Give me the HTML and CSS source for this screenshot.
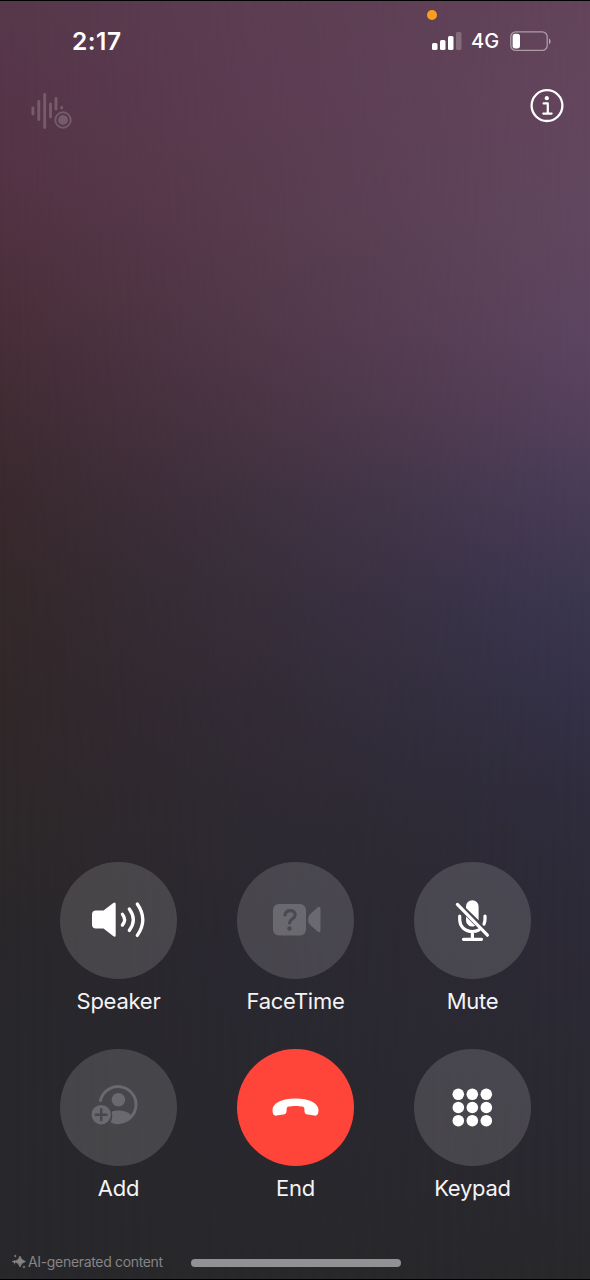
FILE: index.html
```html
<!DOCTYPE html>
<html lang="en">
<head>
<meta charset="utf-8">
<title>Call</title>
<link rel="stylesheet" href="styles.css">
</head>
<body>
<main class="phone">
  <header class="status">
    <time class="clock">2:17</time>
    <div class="status-icons">
      <svg class="signal" width="30" height="18" viewBox="0 0 30 18" fill="#fff">
        <rect x="0" y="11" width="5.500" height="7" rx="1.600"/>
        <rect x="8" y="8" width="5.500" height="10" rx="1.600"/>
        <rect x="16" y="4" width="5.500" height="14" rx="1.600"/>
        <rect x="24" y="0" width="5.500" height="18" rx="1.600" opacity=".22"/>
      </svg>
      <span class="network">4G</span>
      <svg class="battery" width="41" height="21" viewBox="0 0 41 21">
        <rect x=".8" y=".8" width="36.400" height="18.600" rx="5" fill="none" stroke="#fff" stroke-opacity=".48" stroke-width="1.300"/>
        <rect x="2.600" y="2.800" width="7.400" height="14.600" rx="2.600" fill="#fff"/>
        <path d="M39 7.500c2 .9 2 4.800 0 5.700z" fill="#fff" opacity=".55"/>
      </svg>
    </div>
    <i class="mic-dot"></i>
  </header>
  <nav class="tools">
    <svg width="42" height="38" viewBox="0 0 42 38" class="record">
      <g fill="none" stroke="currentColor" stroke-width="2.900" stroke-linecap="round">
        <path d="M2.900 16v6M8.800 9.500v18M14.700 2.500v33M20.500 12v13M26 6.500v10.500M31.700 15.500v.5"/>
        <circle cx="33" cy="28" r="7.700" stroke-width="1.900"/>
      </g>
      <circle cx="33" cy="28" r="5" fill="currentColor"/>
    </svg>
    <svg width="34" height="34" viewBox="0 0 34 34" class="info">
      <circle cx="17" cy="16.600" r="15.400" fill="none" stroke="#fff" stroke-width="2.300"/>
      <circle cx="16.800" cy="9.200" r="2.100" fill="#fff"/>
      <path d="M13.600 14.400h4.200v10M13.300 24.600h8.300" fill="none" stroke="#fff" stroke-width="2.200" stroke-linecap="round" stroke-linejoin="round"/>
    </svg>
  </nav>
  <section class="controls">
    <div class="control">
      <button class="disc" aria-label="Speaker">
        <svg width="117" height="117" viewBox="0 0 117 117">
          <path d="M36 48.500h7.500L53.300 41q2.400-1.600 2.400 1.200v30.800q0 3-2.600 1.100L43.500 66.500H36q-4 0-4-4V52.500q0-4 4-4z" fill="#fff"/>
          <path d="M62.400 52.300q4.400 5.400 0 10.800M69.300 47q8 10.700 0 21.400M77.300 42q11 15.700 0 31.400" fill="none" stroke="#fff" stroke-width="3.300" stroke-linecap="round"/>
        </svg>
      </button>
      <span class="label">Speaker</span>
    </div>
    <div class="control">
      <button class="disc" aria-label="FaceTime">
        <svg width="117" height="117" viewBox="0 0 117 117">
          <rect x="36" y="42" width="33" height="31.500" rx="6" class="dim"/>
          <path d="M83.500 46.500v22q0 2.500-2.300 1.500L73.300 63Q71 61 71 57.500t2.300-5.500L81.200 45q2.300-1 2.300 1.500z" class="dim"/>
          <path d="M48 53c.7-6 10.300-5.500 10.200-.3 0 4.300-5.400 3.900-5.600 8.300" fill="none" stroke="#4b4850" stroke-width="3.100" stroke-linecap="round"/>
          <circle cx="52.500" cy="66.500" r="2.200" fill="#4b4850"/>
        </svg>
      </button>
      <span class="label">FaceTime</span>
    </div>
    <div class="control">
      <button class="disc" aria-label="Mute">
        <svg width="117" height="117" viewBox="0 0 117 117">
          <path d="M52 44.500a6.300 6.300 0 0 1 12.600 0v13.700L52 46z" fill="#fff"/>
          <path d="M52 54.500l9.200 9.200Q56 66.200 52.800 61.500q-.8-1.500-.8-3.500z" fill="#fff"/>
          <path d="M45.700 54v3c0 8 5.500 12.500 12.700 12.500q3.700 0 6.600-1.700M71 54v3q0 3-1 5M58.400 69.500v7.500M49.500 77.300h18" fill="none" stroke="#fff" stroke-width="3.200" stroke-linecap="round"/>
          <path d="M43.400 42.400l30 30.800" fill="none" stroke="#fff" stroke-width="3.200" stroke-linecap="round"/>
        </svg>
      </button>
      <span class="label">Mute</span>
    </div>
    <div class="control">
      <button class="disc" aria-label="Add">
        <svg width="117" height="117" viewBox="0 0 117 117">
          <path d="M40.500 51.500A18 18 0 1 1 53.500 73" fill="none" class="dim-line"/>
          <circle cx="58.400" cy="50.800" r="6.800" class="dim"/>
          <path d="M51.700 62.800q2.500-1.200 6.700-1.200c6.500 0 12.100 2.500 13.700 6.100-4.300 5.500-11.200 8-21.500 5.800q2.700-5.500 1.100-10.700z" class="dim"/>
          <circle cx="41.200" cy="65.700" r="9.700" class="dim"/>
          <path d="M35.800 65.700h10.800M41.200 60.300v10.800" fill="none" stroke="#48474b" stroke-width="2.400" stroke-linecap="round"/>
        </svg>
      </button>
      <span class="label">Add</span>
    </div>
    <div class="control">
      <button class="disc end" aria-label="End">
        <svg width="117" height="117" viewBox="0 0 117 117">
          <path d="M58.500 49.500c-13 0-23 4.300-23 11.500 0 4.200 1.200 6 4.200 5.600l6.300-1c3-.5 3.600-1.700 3.600-4.600 0-2.500.7-3 2-3.400 3.500-.9 10.300-.9 13.800 0 1.300.4 2 .9 2 3.400 0 2.900.6 4.100 3.600 4.600l6.300 1c3 .4 4.200-1.400 4.200-5.600 0-7.200-10-11.500-23-11.500z" fill="#fff"/>
        </svg>
      </button>
      <span class="label">End</span>
    </div>
    <div class="control">
      <button class="disc" aria-label="Keypad">
        <svg width="117" height="117" viewBox="0 0 117 117" fill="#fff">
          <circle cx="44.300" cy="45.300" r="5.800"/><circle cx="58.300" cy="45.300" r="5.800"/><circle cx="72.300" cy="45.300" r="5.800"/>
          <circle cx="44.300" cy="58.500" r="5.800"/><circle cx="58.300" cy="58.500" r="5.800"/><circle cx="72.300" cy="58.500" r="5.800"/>
          <circle cx="44.300" cy="71.700" r="5.800"/><circle cx="58.300" cy="71.700" r="5.800"/><circle cx="72.300" cy="71.700" r="5.800"/>
        </svg>
      </button>
      <span class="label">Keypad</span>
    </div>
  </section>
  <footer class="bottom">
    <svg width="14" height="15" viewBox="0 0 14 15" fill="currentColor">
      <path d="M8 2q.8 4.200 5.500 5.500Q8.800 8.800 8 13 7.200 8.800 2.500 7.500 7.200 6.200 8 2z" stroke="currentColor" stroke-width=".8"/>
      <path d="M3.200.5q.3 1.300 1.600 1.600-1.300.3-1.600 1.600-.3-1.300-1.600-1.600Q2.900 1.800 3.200.5zM2.600 5.800l.6 1.400h2v1l-2 .2-.5 2.600L2 8.500.2 8V7l1.800-.2zM12 11l.5 1.500 1.300.4-1.300.5L12 14.800l-.5-1.400-1.300-.5 1.300-.4z"/>
    </svg>
    <span class="notice">AI-generated content</span>
    <i class="home-bar"></i>
  </footer>
</main>
</body>
</html>
```
FILE: styles.css
```css
* {
  box-sizing: border-box;
}

body {
  margin: 0;
  background: #000;
  font-family: Inter, "Liberation Sans", sans-serif;
  color: #fff;
}

.phone {
  position: relative;
  isolation: isolate;
  display: flex;
  flex-direction: column;
  width: 590px;
  height: 1280px;
  border-top: 1px solid #000;
  border-bottom: 1px solid #000;
  overflow: hidden;
  background: linear-gradient(#57384a 0, #56354a 80px, #533344 180px, #4b2f3a 300px, #412c34 400px, #39292e 500px, #34282a 600px, #312729 700px, #2d2829 820px, #29272b 950px, #28282b 1280px);
}

.phone::before {
  content: "";
  position: absolute;
  inset: 0;
  z-index: -1;
  background: linear-gradient(#63445b 0, #63465d 100px, #61475f 220px, #5c4560 330px, #54405b 420px, #463b56 510px, #3b3650 600px, #343147 700px, #2f2c3d 800px, #2d2a38 900px, #2b2933 1050px, #28282b 1280px);
  mask-image: linear-gradient(to right, transparent, #000);
}

.status {
  position: relative;
  display: flex;
  justify-content: space-between;
  height: 80px;
  padding: 26px 39px 0 72px;
}

.clock {
  font-size: 24.500px;
  font-weight: 600;
  line-height: 29px;
  letter-spacing: .5px;
}

.status-icons {
  display: flex;
  align-items: center;
  height: 28px;
}

.signal {
  margin-right: 9px;
}

.network {
  width: 39px;
  font-size: 20px;
  font-weight: 450;
  line-height: 28px;
}

.mic-dot {
  position: absolute;
  left: 427px;
  top: 9px;
  width: 10px;
  height: 10px;
  border-radius: 50%;
  background: #fa9e20;
}

.tools {
  display: flex;
  justify-content: space-between;
  padding: 8px 26px 0 30px;
}

.record {
  margin-top: 3px;
  color: rgba(255, 255, 255, .19);
}

.controls {
  display: grid;
  grid-template-columns: repeat(3, 117px);
  grid-auto-rows: 187px;
  column-gap: 60px;
  margin: auto 0 11.500px 60px;
}

.control {
  display: flex;
  flex-direction: column;
  align-items: center;
}

.disc {
  width: 117px;
  height: 117px;
  padding: 0;
  border: 0;
  border-radius: 50%;
  background: rgba(255, 255, 255, .14);
}

.disc svg {
  display: block;
}

.end {
  background: #ff453a;
}

.dim {
  fill: #6b6970;
}

.dim-line {
  stroke: #6b6970;
  stroke-width: 3;
  stroke-linecap: round;
}

.label {
  margin-top: 8px;
  font-size: 22px;
  line-height: 28px;
  letter-spacing: -.25px;
  white-space: nowrap;
  color: #f4f3f5;
}

.bottom {
  display: flex;
  align-items: center;
  height: 29px;
  margin-bottom: 3px;
  padding-left: 12px;
  color: #858487;
}

.notice {
  width: 137px;
  margin-left: 2px;
  font-size: 14px;
  letter-spacing: -.33px;
  white-space: nowrap;
}

.home-bar {
  width: 210px;
  height: 8px;
  margin: 2px 0 0 26px;
  border-radius: 4px;
  background: #929193;
}
```
